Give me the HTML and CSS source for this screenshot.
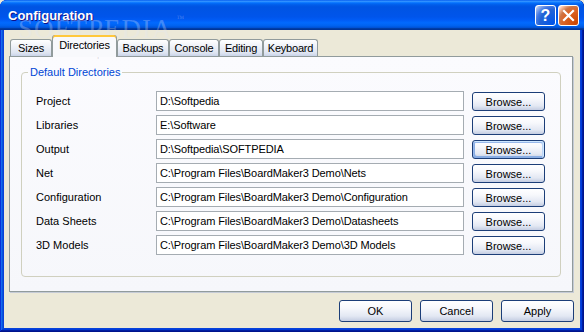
FILE: index.html
```html
<!DOCTYPE html>
<html>
<head>
<meta charset="utf-8">
<title>Configuration</title>
<link rel="stylesheet" href="styles.css">
</head>
<body>
<div class="window">
  <div class="titlebar">
    <span class="title">Configuration</span>
    <div class="controls">
      <button class="ctl help">?</button>
      <button class="ctl close"><svg width="13" height="13" viewBox="0 0 13 13"><path d="M2 2 L11 11 M11 2 L2 11" stroke="#fff" stroke-width="2.2" stroke-linecap="square"/></svg></button>
    </div>
  </div>
  <div class="body">
    <div class="tabs">
      <div class="tab t-sizes">Sizes</div>
      <div class="tab active t-dirs">Directories</div>
      <div class="tab t-backups">Backups</div>
      <div class="tab t-console">Console</div>
      <div class="tab t-editing">Editing</div>
      <div class="tab t-keyboard">Keyboard</div>
    </div>
    <div class="panel">
      <fieldset class="group">
        <legend>Default Directories</legend>
        <div class="rows">
          <span class="lbl">Project</span><div class="field">D:\Softpedia</div><button class="btn">Browse...</button>
          <span class="lbl">Libraries</span><div class="field">E:\Software</div><button class="btn">Browse...</button>
          <span class="lbl">Output</span><div class="field">D:\Softpedia\SOFTPEDIA</div><button class="btn default">Browse...</button>
          <span class="lbl">Net</span><div class="field">C:\Program Files\BoardMaker3 Demo\Nets</div><button class="btn">Browse...</button>
          <span class="lbl">Configuration</span><div class="field">C:\Program Files\BoardMaker3 Demo\Configuration</div><button class="btn">Browse...</button>
          <span class="lbl">Data Sheets</span><div class="field">C:\Program Files\BoardMaker3 Demo\Datasheets</div><button class="btn">Browse...</button>
          <span class="lbl">3D Models</span><div class="field">C:\Program Files\BoardMaker3 Demo\3D Models</div><button class="btn">Browse...</button>
        </div>
      </fieldset>
    </div>
    <div class="actions">
      <button class="btn big">OK</button>
      <button class="btn big">Cancel</button>
      <button class="btn big">Apply</button>
    </div>
  </div>
  <span class="wm-big">SOFTPEDIA<span class="tm">™</span></span>
  <span class="wm-small">www.softpedia.com</span>
</div>
</body>
</html>
```

FILE: styles.css
```css
* { box-sizing: border-box; }
html, body { margin: 0; padding: 0; }
body {
  width: 584px;
  height: 332px;
  background: #ECE9D8;
  font-family: "Liberation Sans", Arial, sans-serif;
  font-size: 11px;
  color: #000;
  overflow: hidden;
}
.window {
  position: relative;
  width: 584px;
  height: 332px;
  display: flex;
  flex-direction: column;
  background: #0842D9;
  border-radius: 7px 7px 0 0;
  padding: 0 4px 4px 4px;
  box-shadow: inset -1px -1px #00138c, inset 1px 1px #0831d9, inset -2px -2px #001ea0, inset 2px 2px #166aee, inset -3px -3px #003bda, inset 3px 3px #0855dd;
}
.titlebar {
  height: 30px;
  margin: 0 -4px;
  padding: 0 5px 0 8px;
  display: flex;
  align-items: center;
  justify-content: space-between;
  border-radius: 7px 7px 0 0;
  background: linear-gradient(180deg, #0058ee 0%, #3593ff 4%, #288eff 6%, #127dff 8%, #036ffc 10%, #0262ee 14%, #0057e5 20%, #0054e3 24%, #0055eb 56%, #005bf5 66%, #026afe 76%, #0062ef 86%, #0052d6 92%, #0040ab 94%, #003092 100%);
}
.title {
  color: #fff;
  font-family: "Liberation Sans", Arial, sans-serif;
  font-weight: bold;
  font-size: 13px;
  text-shadow: 1px 1px #0f1089;
  padding-top: 1px;
}
.controls { display: flex; gap: 2px; padding-top: 1px; }
.ctl {
  width: 21px;
  height: 21px;
  padding: 0;
  border: 1px solid #fff;
  border-radius: 3px;
  display: flex;
  align-items: center;
  justify-content: center;
  color: #fff;
  font-family: "Liberation Sans", Arial, sans-serif;
  font-weight: bold;
  font-size: 16px;
  line-height: 1;
}
.help {
  background: radial-gradient(circle at 90% 90%, #0054e9 0, #2263d5 55%, #4479e4 70%, #a3bbec 90%, #fff 100%);
}
.close {
  background: radial-gradient(circle at 90% 90%, #cc4600 0, #dc6527 55%, #cd7546 70%, #ffccb2 90%, #fff 100%);
}
.body {
  flex: 1;
  background: #ECE9D8;
  padding: 5px 7px 0 5px;
  display: flex;
  flex-direction: column;
}
.tabs {
  height: 21px;
  display: flex;
  align-items: flex-end;
  padding-left: 1px;
  position: relative;
  z-index: 1;
}
.tab {
  height: 17px;
  padding: 0;
  border: 1px solid #919b9c;
  border-bottom: none;
  border-radius: 3px 3px 0 0;
  background: linear-gradient(180deg, #ffffff 0%, #f3f5fa 30%, #dfe5f1 80%, #c9d3e8 100%);
  display: flex;
  align-items: center;
  justify-content: center;
  white-space: nowrap;
  letter-spacing: -0.2px;
}
.t-sizes { width: 42px; }
.t-dirs { width: 65px; }
.t-backups { width: 52px; }
.t-console { width: 50px; }
.t-editing { width: 44px; }
.t-keyboard { width: 55px; }
.tab.active {
  height: 22px;
  margin-bottom: -1px;
  padding-bottom: 3px;
  background: #f8f9fc;
  border-top: none;
  box-shadow: inset 0 2px #ffc83c, inset 0 1px #e68b2c;
}
.panel {
  height: 236px;
  border: 1px solid #919b9c;
  background: linear-gradient(180deg, #fbfbfe 0%, #f6f7fb 100%);
  box-shadow: 1px 1px #c5cbd6;
  padding: 9px 11px 0 11px;
}
.group {
  margin: 0;
  height: 211px;
  border: 1px solid #d0d0bf;
  border-radius: 4px;
  padding: 0 15px 0 14px;
}
.group legend {
  color: #0046d5;
  padding: 0 2px;
  margin-left: -8px;
  line-height: 13px;
}
.rows {
  margin-top: 12px;
  display: grid;
  grid-template-columns: 112px 308px 73px;
  grid-auto-rows: 20px;
  column-gap: 8px;
  row-gap: 4px;
  align-items: center;
}
.lbl { white-space: nowrap; }
.field {
  height: 20px;
  border: 1px solid #a5acb2;
  background: #fff;
  padding: 0 3px;
  display: flex;
  align-items: center;
  white-space: nowrap;
  overflow: hidden;
  letter-spacing: -0.1px;
}
.btn {
  font-family: "Liberation Sans", Arial, sans-serif;
  font-size: 11px;
  color: #000;
  border: 1px solid #1c3e78;
  border-radius: 3px;
  background: linear-gradient(180deg, #ffffff 0%, #f7f8fc 35%, #e3e8f3 75%, #c4cde2 100%);
  padding: 0;
  display: flex;
  align-items: center;
  justify-content: center;
}
.rows .btn { height: 19px; margin-top: 1px; }
.btn.default {
  box-shadow: inset -1px 1px #cee7ff, inset 1px 2px #98b8ea, inset -2px 2px #bcd4f6, inset 1px -1px #89ade4, inset 2px -2px #89ade4;
}
.actions {
  margin-top: 8px;
  display: flex;
  justify-content: flex-end;
  gap: 8px;
  margin-right: -1px;
}
.btn.big { width: 73px; height: 22px; }
.wm-big {
  position: absolute;
  left: 18px;
  top: 14px;
  font-family: "Liberation Serif", serif;
  font-size: 27px;
  letter-spacing: 1px;
  color: rgba(225, 230, 245, 0.28);
  pointer-events: none;
}
.wm-big .tm { font-size: 8px; vertical-align: top; margin-left: 4px; }
.wm-small {
  position: absolute;
  left: 57px;
  top: 48px;
  font-size: 10px;
  color: rgba(160, 160, 170, 0.35);
  pointer-events: none;
}
```
